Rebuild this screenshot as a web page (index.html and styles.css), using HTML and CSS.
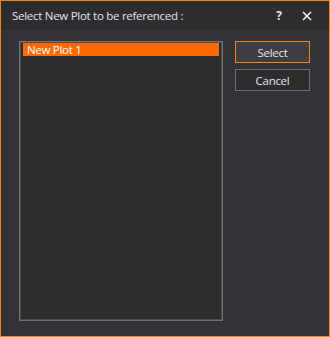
FILE: index.html
```html
<!DOCTYPE html>
<html>
<head>
<meta charset="utf-8">
<link rel="stylesheet" href="styles.css">
</head>
<body>
<div class="dialog">
  <div class="titlebar">
    <span class="title">Select New Plot to be referenced :</span>
    <span class="help">?</span>
    <span class="close">
      <svg width="10" height="10" viewBox="0 0 10 10"><path d="M1 1 L9 9 M9 1 L1 9" stroke="#f0f0f0" stroke-width="1.6" fill="none"/></svg>
    </span>
  </div>
  <div class="content">
    <div class="listbox">
      <div class="item selected">New Plot 1</div>
    </div>
    <div class="buttons">
      <button class="btn primary">Select</button>
      <button class="btn">Cancel</button>
    </div>
  </div>
</div>
</body>
</html>
```

FILE: styles.css
```css
html, body {
  margin: 0;
  padding: 0;
  background: #333337;
}
.dialog {
  width: 330px;
  height: 337px;
  box-sizing: border-box;
  border: 1px solid #f5870f;
  background: #333337;
  font-family: "Open Sans", "Noto Sans", sans-serif;
  display: flex;
  flex-direction: column;
}
.titlebar {
  height: 29px;
  background: #2d2d30;
  display: flex;
  align-items: center;
  padding-left: 11px;
  color: #e6e6e6;
  font-size: 11.5px;
}
.title {
  flex: 1;
  letter-spacing: -0.28px;
}
.help {
  font-weight: bold;
  font-size: 12px;
  margin-right: 20px;
  color: #e8e8e8;
}
.close {
  display: flex;
  margin-right: 17px;
}
.content {
  display: flex;
  padding: 11px 0 0 18px;
  gap: 12px;
}
.listbox {
  width: 204px;
  height: 280px;
  box-sizing: border-box;
  border: 1px solid #727272;
  box-shadow: inset 0 0 0 1px #4e4e52;
  background: #2d2d2f;
  padding: 1px 3px;
}
.item {
  height: 13px;
  line-height: 13px;
  font-size: 11.5px;
  letter-spacing: -0.3px;
  color: #ffffff;
  padding-left: 4px;
}
.selected {
  background: #ff6a00;
}
.buttons {
  display: flex;
  flex-direction: column;
  gap: 6px;
}
.btn {
  width: 75px;
  height: 22px;
  box-sizing: border-box;
  border: 1px solid #6e6e6e;
  background: #2d2d30;
  color: #e6e6e6;
  font-family: "Open Sans", "Noto Sans", sans-serif;
  font-size: 11.5px;
  letter-spacing: -0.3px;
  padding: 0;
}
.btn.primary {
  border-color: #f0880f;
  background: #3e3e42;
}
```
